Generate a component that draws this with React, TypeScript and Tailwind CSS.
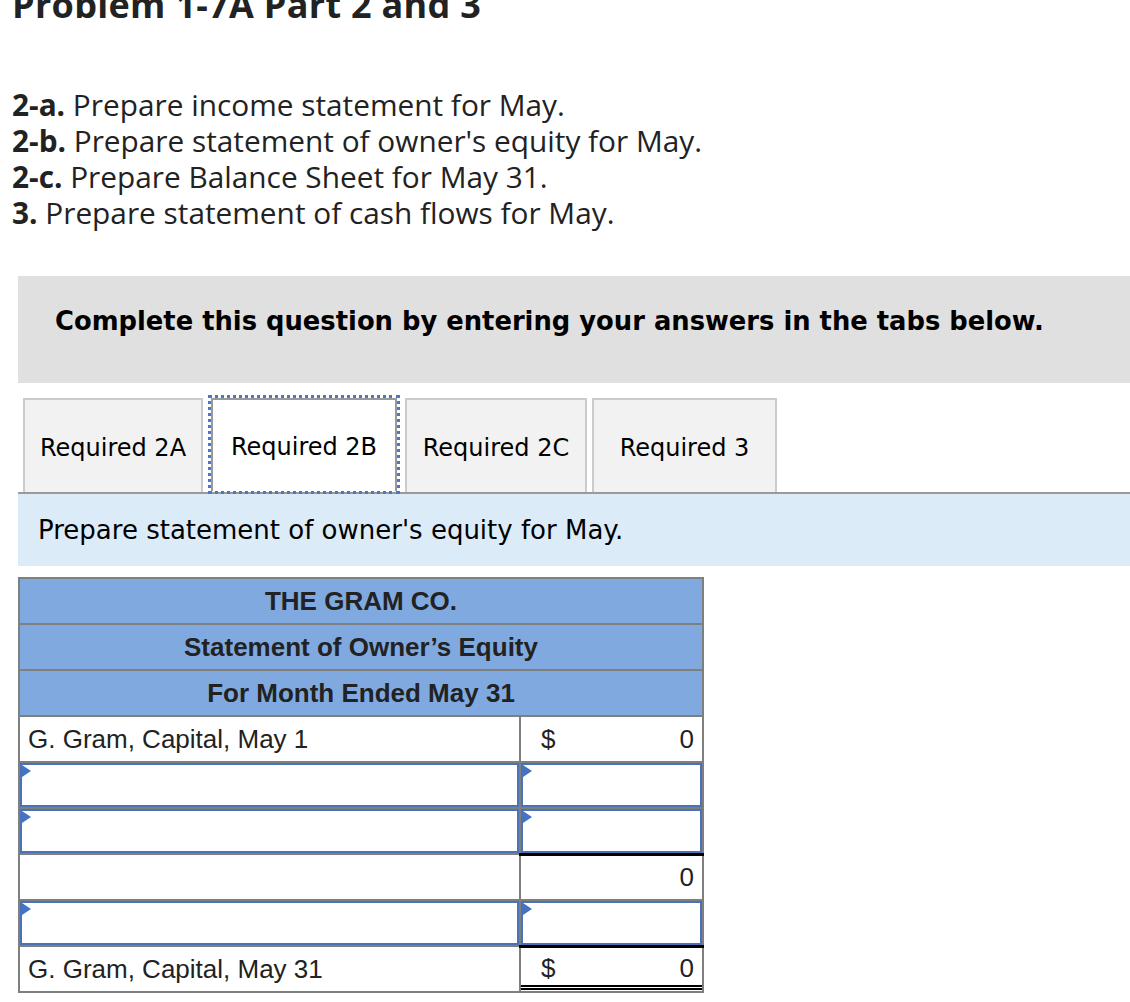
import React from 'react';

const tabs = [
  { label: 'Required 2A', w: 'w-[180px]' },
  { label: 'Required 2B', w: 'w-[192px]', active: true },
  { label: 'Required 2C', w: 'w-[182px]' },
  { label: 'Required 3', w: 'w-[185px]' },
];

function Marker() {
  return (
    <span className="absolute left-[2px] top-[2px] w-0 h-0 border-y-[6px] border-y-transparent border-l-[9px] border-l-[#4472c4]" />
  );
}

function InputCell() {
  return (
    <td className="relative p-0 border-2 border-[#7f7f7f] h-[46px]">
      <div className="absolute inset-0 border-2 border-[#4a72b8] bg-white" />
      <Marker />
    </td>
  );
}

export default function App() {
  return (
    <div className="bg-white min-h-screen text-[#222]" style={{ fontFamily: '"Open Sans", Lato, sans-serif' }}>
      <h1 className="pl-[12px] -mt-[15px] text-[36px] font-bold leading-[40px] tracking-[0.3px]">Problem 1-7A Part 2 and 3</h1>

      <div className="mt-[62px] pl-[12px] text-[29.8px] leading-[36px]">
        <p><b>2-a.</b> Prepare income statement for May.</p>
        <p><b>2-b.</b> Prepare statement of owner's equity for May.</p>
        <p><b>2-c.</b> Prepare Balance Sheet for May 31.</p>
        <p><b>3.</b> Prepare statement of cash flows for May.</p>
      </div>

      <div className="ml-[18px]" style={{ fontFamily: '"DejaVu Sans", Verdana, sans-serif' }}>
        <div className="mt-[45px] h-[107px] bg-[#e0e0e0] pl-[37px] pt-[26px]">
          <p className="text-[25.8px] font-bold text-black">Complete this question by entering your answers in the tabs below.</p>
        </div>

        <div className="mt-[12px] flex items-end gap-[5px] pl-[5px]">
          {tabs.map((t) =>
            t.active ? (
              <div key={t.label} className={`${t.w} h-[99px] -mb-[2px] border-[3px] border-dotted border-[#4a78c2] relative z-10`}>
                <div className="h-full border-2 border-b-0 border-[#9a9a9a] bg-white flex items-center justify-center text-[24px] text-black pt-[2px]">
                  {t.label}
                </div>
              </div>
            ) : (
              <div key={t.label} className={`${t.w} h-[94px] border-2 border-b-0 border-[#cbcbcb] bg-[#f2f2f2] flex items-center justify-center text-[24px] text-black pt-[4px]`}>
                {t.label}
              </div>
            )
          )}
        </div>
        <div className="border-t-2 border-[#9a9a9a] h-[74px] bg-[#dcebf8] pl-[20px] flex items-center">
          <p className="text-[26px] text-black">Prepare statement of owner's equity for May.</p>
        </div>
      </div>

      <div className="ml-[18px] mt-[11px]" style={{ fontFamily: '"Liberation Sans", Arial, sans-serif' }}>
        <table className="w-[684px] border-collapse border-2 border-[#7f7f7f] text-[26px] text-[#222] table-fixed">
          <colgroup>
            <col className="w-[501px]" />
            <col className="w-[183px]" />
          </colgroup>
          <tbody>
            {['THE GRAM CO.', 'Statement of Owner\u2019s Equity', 'For Month Ended May 31'].map((h) => (
              <tr key={h}>
                <td colSpan={2} className="h-[46px] bg-[#80aadf] border-2 border-[#7f7f7f] text-center font-bold p-0 leading-none">
                  {h}
                </td>
              </tr>
            ))}
            <tr>
              <td className="h-[46px] border-2 border-[#7f7f7f] pl-[8px] p-0 leading-none">G. Gram, Capital, May 1</td>
              <td className="border-2 border-[#7f7f7f] p-0 leading-none">
                <div className="flex justify-between pl-[20px] pr-[8px]">
                  <span>$</span>
                  <span>0</span>
                </div>
              </td>
            </tr>
            <tr>
              <InputCell />
              <InputCell />
            </tr>
            <tr>
              <InputCell />
              <InputCell />
            </tr>
            <tr>
              <td className="h-[46px] border-2 border-[#7f7f7f] p-0" />
              <td className="border-2 border-[#7f7f7f] border-t-[3px] border-t-black p-0 text-right pr-[8px] leading-none">0</td>
            </tr>
            <tr>
              <InputCell />
              <InputCell />
            </tr>
            <tr>
              <td className="h-[46px] border-2 border-[#7f7f7f] pl-[8px] p-0 leading-none">G. Gram, Capital, May 31</td>
              <td className="border-2 border-[#7f7f7f] border-t-[3px] border-t-black p-0 leading-none">
                <div className="flex justify-between pl-[20px] pr-[8px] pt-[6px] pb-[4px] border-b-[5px] border-double border-black">
                  <span>$</span>
                  <span>0</span>
                </div>
              </td>
            </tr>
          </tbody>
        </table>
      </div>
    </div>
  );
}
